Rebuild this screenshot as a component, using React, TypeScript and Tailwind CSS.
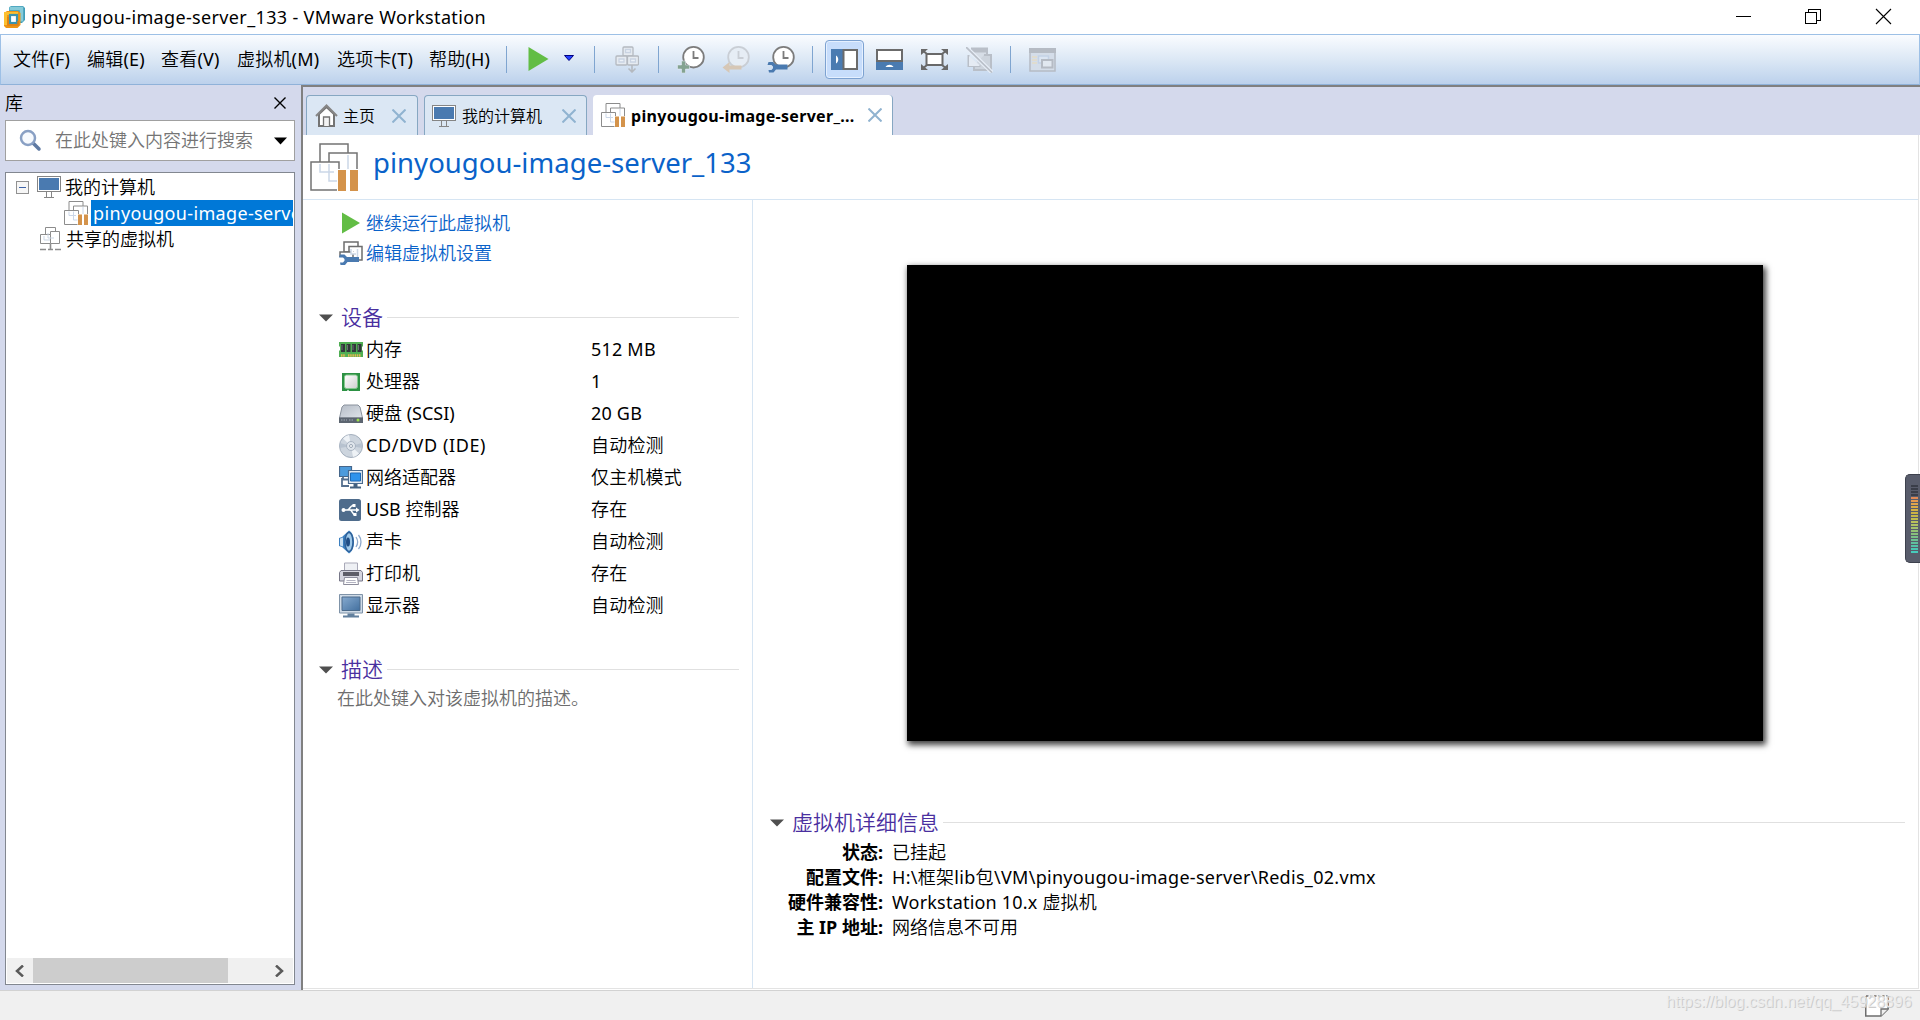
import type { ReactNode } from 'react'

const menus = [
  { label: '文件(F)', width: 'w-[74px]' },
  { label: '编辑(E)', width: 'w-[74px]' },
  { label: '查看(V)', width: 'w-[76px]' },
  { label: '虚拟机(M)', width: 'w-[100px]' },
  { label: '选项卡(T)', width: 'w-[92px]' },
  { label: '帮助(H)', width: 'w-[76px]' },
]

const devices = [
  { icon: <MemoryIcon />, name: '内存', value: '512 MB' },
  { icon: <CpuIcon />, name: '处理器', value: '1' },
  { icon: <DiskIcon />, name: '硬盘 (SCSI)', value: '20 GB' },
  { icon: <CdIcon />, name: 'CD/DVD (IDE)', value: '自动检测', tracking: 'tracking-[0.6px]' },
  { icon: <NetworkIcon />, name: '网络适配器', value: '仅主机模式' },
  { icon: <UsbIcon />, name: 'USB 控制器', value: '存在' },
  { icon: <SoundIcon />, name: '声卡', value: '自动检测' },
  { icon: <PrinterIcon />, name: '打印机', value: '存在' },
  { icon: <DisplayIcon />, name: '显示器', value: '自动检测' },
]

const details = [
  { label: '状态:', value: '已挂起' },
  { label: '配置文件:', value: 'H:\\框架lib包\\VM\\pinyougou-image-server\\Redis_02.vmx', tracking: 'tracking-[0.3px]' },
  { label: '硬件兼容性:', value: 'Workstation 10.x 虚拟机', tracking: 'tracking-[0.2px]' },
  { label: '主 IP 地址:', value: '网络信息不可用' },
]

const meterColors = [
  '#e08a55', '#e39a50', '#e0a54c', '#d9ac48', '#d3b145', '#ccb445', '#c6b848', '#c0bd50', '#b9c15a', '#aec264',
  '#a2c26c', '#95c174', '#88c07c', '#7abf86', '#6dc092', '#60c09e', '#54c2a8', '#4cc6b2', '#46cbbb',
]

export default function App() {
  return (
    <div className="flex h-[1020px] w-[1920px] flex-col overflow-hidden bg-white font-['Noto_Sans','Noto_Sans_CJK_SC_DemiLight','Noto_Sans_CJK_SC_Light','Noto_Sans_CJK_SC',sans-serif] text-[18px] leading-[26px] text-black">
      <TitleBar />
      <Toolbar />
      <div className="flex h-[905px] bg-[#d4d9ec]">
        <Library />
        <main className="flex w-[1619px] flex-col border-t-2 border-l-2 border-[#808080] bg-white">
          <Tabs />
          <div className="flex h-[854px] w-[1616px] flex-col border-r border-b border-[#e3e3e3]">
            <header className="flex h-[65px] shrink-0 items-center border-b border-[#d6e5f3] pl-[7px]">
              <VmIcon size={48} stroke={1.5} />
              <h1 className="mb-[8px] ml-[15px] text-[27.5px] leading-[36px] tracking-[0.03px] whitespace-nowrap text-[#0a62c9]">
                pinyougou-image-server_133
              </h1>
            </header>
            <div className="flex grow">
              <Summary />
              <Preview />
            </div>
          </div>
        </main>
      </div>
      <footer className="flex h-[30px] shrink-0 justify-end border-t border-[#d2d2d2] bg-[#f0f0f0]">
        <div className="relative h-full w-[260px]">
          <svg className="absolute top-[4px] left-[205px]" width="24" height="22" viewBox="0 0 24 22">
            <path d="M.75 1v20H16l7.2-7V1" fill="#fff" stroke="#6e6e6e" strokeWidth="1.5" />
            <path d="M1 1h22" stroke="#6e6e6e" strokeWidth="1.5" strokeDasharray="2.5 1.5" />
            <path d="M16 21v-7h7" fill="#eee" stroke="#6e6e6e" strokeWidth="1.3" />
          </svg>
          <span className="absolute top-[1px] left-[6px] font-['Liberation_Sans',sans-serif] text-[16px] leading-[20px] whitespace-nowrap text-[#efefef]/80 [text-shadow:1px_1px_0_#cccccc]">
            https://blog.csdn.net/qq_45928896
          </span>
        </div>
      </footer>
      <VolumeMeter />
    </div>
  )
}

function TitleBar() {
  return (
    <div className="flex h-[34px] shrink-0 items-center justify-between pl-[3px]">
      <div className="flex items-center">
        <LogoIcon />
        <span className="ml-[5px] tracking-[0.35px] whitespace-nowrap">pinyougou-image-server_133 - VMware Workstation</span>
      </div>
      <svg width="184" height="34" viewBox="0 0 184 34" fill="none" stroke="#000">
        <path d="M0 16.500h15M69.500 12.500h11v11h-11zM72.500 12.500v-3h11.500v11h-3.500" shapeRendering="crispEdges" />
        <path d="M140 9l15 15M155 9l-15 15" strokeWidth="1.1" />
      </svg>
    </div>
  )
}

function Separator({ className }: { className: string }) {
  return <div className={`h-[27px] w-px shrink-0 bg-[#7fa5d0] ${className}`} />
}

function Toolbar() {
  return (
    <div className="flex h-[51px] shrink-0 items-center border border-[#9dc0e6] border-b-[#8fb2d9] bg-linear-to-b from-[#fafcff] via-[#dce8f5] to-[#bcd1ec] pl-[12px]">
      {menus.map((menu) => (
        <span key={menu.label} className={`${menu.width} mb-[2px] shrink-0 tracking-[0.2px] whitespace-nowrap`}>
          {menu.label}
        </span>
      ))}
      <Separator className="ml-px" />
      <svg className="ml-[21px]" width="48" height="25" viewBox="0 0 48 25">
        <path d="M.5 0v24L20.500 12z" fill="#62bd45" />
        <path d="M36.500 8.500h9l-4.500 5z" fill="#2340ff" stroke="#000080" />
      </svg>
      <Separator className="ml-[18px]" />
      <svg className="ml-[20px]" width="24" height="27" viewBox="0 0 24 27" fill="#e6ebf1" stroke="#b4b9c0" strokeWidth="1.300">
        <rect x="8" y="1" width="10" height="9" rx="1" />
        <rect x="1" y="10" width="11" height="9" rx="1" />
        <rect x="12.500" y="10" width="11" height="9" rx="1" />
        <path d="M10.500 3.500h5v3h-5zM4 13h5v3H4zM15.500 13h5v3h-5z" stroke="#c9d3e2" fill="#edf2f8" />
        <path d="M17 19v7M13.500 22.500l3.500 3.500 3.500-3.500" fill="none" strokeWidth="1.600" />
      </svg>
      <Separator className="ml-[19px]" />
      <Clock className="ml-[18px]">
        <path d="M4.500 15h4v4h4v4h-4v4h-4v-4h-4v-4h4z" fill="#84a391" stroke="#eef3fa" strokeWidth=".5" />
      </Clock>
      <Clock className="ml-[17px]" faded>
        <path d="M.5 21.500L7.500 16v3.500h12v4h-12V27z" fill="#d6c7b6" />
      </Clock>
      <Clock className="ml-[17px]">
        <Wrench x={0.5} y={15.5} />
      </Clock>
      <Separator className="ml-[17px]" />
      <div className="ml-[12px] flex h-[39px] w-[39px] shrink-0 items-center justify-center rounded-[4px] border border-[#7da2d1] bg-[#c7ddfb] shadow-[inset_0_0_0_1px_#e5f0ff]">
        <svg width="27" height="21" viewBox="0 0 27 21">
          <path d="M0 0h27v21H0z" fill="#4a7bb1" />
          <path d="M12.500 1H26v19H12.500z" fill="#fff" stroke="#6b6b6b" strokeWidth="2" />
          <path d="M5 6.500c3 2 3 6 0 8z" fill="#fff" />
        </svg>
      </div>
      <svg className="ml-[12px]" width="27" height="21" viewBox="0 0 27 21">
        <path d="M0 0h27v21H0z" fill="#4a7bb1" />
        <path d="M1 1h25v11H1z" fill="#fff" stroke="#6b6b6b" strokeWidth="2" />
        <path d="M9.500 18c2-3 6-3 8 0z" fill="#fff" />
      </svg>
      <svg className="ml-[18px]" width="27" height="21" viewBox="0 0 27 21" fill="none" stroke="#696969" strokeWidth="2">
        <rect x="5.500" y="5" width="16" height="11" fill="#fff" rx=".5" />
        <path d="M1 1l5 4M26 1l-5 4M26 20l-5-4M1 20l5-4" />
        <path d="M0 0h7L0 6zM27 0h-7l7 6zM27 21h-7l7-6zM0 21h7l-7-6z" fill="#696969" stroke="none" />
      </svg>
      <svg className="ml-[18px]" width="27" height="26" viewBox="0 0 27 26" fill="none" stroke="#b9bfc8" strokeWidth="2">
        <path d="M6 3h15v14H12" fill="#d6dde6" />
        <path d="M6 1.500h15v3H6z" fill="#b9bfc8" />
        <path d="M18 8h7v15H8v-4" fill="#cdd4dd" />
        <path d="M2.500 8v11h12" fill="#dfe6ef" />
        <path d="M3 9l11 10H3z" fill="#e5ebf3" stroke="none" />
        <path d="M0 0l26 25.500" stroke="#e8eff8" strokeWidth="4" />
        <path d="M0 0l26 25.500" strokeWidth="1.700" />
      </svg>
      <Separator className="ml-[17px]" />
      <svg className="ml-[18px]" width="27" height="24" viewBox="0 0 27 24" fill="none" stroke="#b5bbc4" strokeWidth="1.500">
        <rect x="1" y="1" width="25" height="22" fill="#d4dde9" />
        <path d="M0 2.500h27" strokeWidth="5" />
        <path d="M3 9h5M3 12h5M3 15h5" stroke="#e3dcc6" />
        <rect x="9.500" y="8" width="10" height="7" fill="#dbe5f2" stroke="#c3d2e6" />
        <rect x="13" y="12" width="10.500" height="7.500" fill="#e1e8f0" strokeWidth="2" />
      </svg>
    </div>
  )
}

function Library() {
  return (
    <aside className="flex w-[301px] shrink-0 flex-col pl-[5px]">
      <div className="flex h-[35px] items-center justify-between pr-[15px]">
        <span>库</span>
        <svg width="12" height="12" viewBox="0 0 12 12" stroke="#000" strokeWidth="1.400">
          <path d="M.5.5l11 11M11.500.5l-11 11" />
        </svg>
      </div>
      <div className="flex h-[41px] w-[290px] items-center border border-[#a0a0a0] bg-white pl-[13px]">
        <svg width="23" height="23" viewBox="0 0 23 23" fill="none" strokeLinecap="round">
          <path d="M14 14l6 6" stroke="#5f7aa3" strokeWidth="3.500" />
          <circle cx="9" cy="9" r="7" fill="#f7fafe" stroke="#89a0c4" strokeWidth="2.500" />
        </svg>
        <span className="mb-px ml-[13px] w-[219px] text-[#757575]">在此处键入内容进行搜索</span>
        <svg width="13" height="8" viewBox="0 0 13 8">
          <path d="M0 .5h13L6.500 7.500z" />
        </svg>
      </div>
      <div className="mt-[11px] flex h-[813px] w-[290px] flex-col justify-between overflow-hidden border border-[#828790] bg-white pr-px pb-px">
        <div className="pt-px">
          <div className="flex h-[26px] items-center pl-[10px]">
            <svg width="13" height="13" viewBox="0 0 13 13" shapeRendering="crispEdges">
              <path d="M.5.5h12v12H.5z" fill="#f6f6f6" stroke="#919191" />
              <path d="M3 6.500h7" stroke="#3f63a8" />
            </svg>
            <span className="ml-[8px]"><MonitorIcon /></span>
            <span className="ml-[4px]">我的计算机</span>
          </div>
          <div className="flex h-[26px] items-center pl-[58px]">
            <VmIcon size={24} stroke={2} />
            <span className="ml-[3px] h-[26px] grow overflow-hidden bg-[#0078d7] pl-[2px] tracking-[0.35px] whitespace-nowrap text-white">
              pinyougou-image-server_133
            </span>
          </div>
          <div className="flex h-[26px] items-center pl-[34px]">
            <svg width="21" height="24" viewBox="0 0 21 24" fill="#fff" stroke="#8c8c8c">
              <path d="M5.500.5h10v9h-10z" />
              <path d="M10.500 4.500h9v12h-9z" />
              <path d="M.5 7.500h10v9H.5z" />
              <path d="M4 9v4h6M8 6v5h6" stroke="#ccd7e5" fill="none" />
              <path d="M10.500 17v5M0 22.500h6M8 22.500h5M15 22.500h6" strokeWidth="1.600" />
            </svg>
            <span className="ml-[5px]">共享的虚拟机</span>
          </div>
        </div>
        <div className="ml-px flex h-[25px] items-center justify-between bg-[#f0f0f0] pr-[9px] pl-[8px]">
          <svg width="9" height="12" viewBox="0 0 9 12" fill="none" stroke="#5a5a5a" strokeWidth="2.500">
            <path d="M8 .5L2 6l6 5.500" />
          </svg>
          <div className="mr-[47px] ml-[9px] h-[25px] grow bg-[#cdcdcd]" />
          <svg width="9" height="12" viewBox="0 0 9 12" fill="none" stroke="#5a5a5a" strokeWidth="2.500">
            <path d="M1 .5L7 6l-6 5.500" />
          </svg>
        </div>
      </div>
    </aside>
  )
}

function TabClose() {
  return (
    <svg width="14" height="14" viewBox="0 0 14 14" stroke="#90b3d0" strokeWidth="2">
      <path d="M.5.5l13 13M13.500.5l-13 13" />
    </svg>
  )
}

function Tabs() {
  return (
    <div className="flex h-[48px] w-full shrink-0 items-end bg-[#d4d9ec] pl-[3px] text-[16px] whitespace-nowrap">
      <div className="flex h-[40px] w-[112px] items-center rounded-t-[4px] border border-b-0 border-[#86a7c2] bg-[#dbe7f4] pl-[8px]">
        <svg width="23" height="23" viewBox="0 0 23 23" fill="#fff" stroke="#747474" strokeWidth="2">
          <path d="M4 10v12h15V10L11.500 3z" />
          <path d="M1 12L11.500 1.500 22 12" fill="none" stroke="#868686" />
          <path d="M8.500 22v-9h6v9" fill="#f3f3f3" strokeWidth="1.300" />
        </svg>
        <span className="ml-[5px] w-[49px] pt-[1px]">主页</span>
        <TabClose />
      </div>
      <div className="ml-[6px] flex h-[40px] w-[163px] items-center rounded-t-[4px] border border-b-0 border-[#86a7c2] bg-[#dbe7f4] pl-[7px]">
        <MonitorIcon />
        <span className="ml-[6px] w-[100px] pt-[1px]">我的计算机</span>
        <TabClose />
      </div>
      <div className="ml-[6px] flex h-[40px] w-[300px] items-center rounded-t-[4px] border-r border-[#86a7c2] bg-white pl-[8px]">
        <VmIcon size={24} stroke={2} />
        <span className="ml-[6px] w-[237px] pt-[2px] font-bold tracking-[0.3px]">pinyougou-image-server_...</span>
        <TabClose />
      </div>
    </div>
  )
}

function SectionTitle({ children }: { children: ReactNode }) {
  return (
    <div className="flex h-[28px] items-center">
      <svg width="14" height="8" viewBox="0 0 14 8">
        <path d="M0 .5h14L7 7.500z" fill="#4f4f4f" />
      </svg>
      <h2 className="mb-[2px] ml-[8px] text-[21px] leading-[28px] text-[#4a2f9f]">{children}</h2>
      <div className="mb-px ml-[4px] h-px grow bg-[#e0e0e0]" />
    </div>
  )
}

function Summary() {
  return (
    <section className="flex w-[450px] shrink-0 flex-col border-r border-[#d6e5f3] pt-[8px]">
      <div className="flex h-[30px] items-center pl-[38px] text-[#0a62c9]">
        <svg width="20" height="22" viewBox="0 0 20 22">
          <path d="M1 .5v21L19 11z" fill="#62bd45" />
        </svg>
        <span className="ml-[5px]">继续运行此虚拟机</span>
      </div>
      <div className="flex h-[30px] items-center pl-[36px] text-[#0a62c9]">
        <svg width="24" height="24" viewBox="0 0 24 24" fill="#fff" stroke="#6e6e6e" strokeWidth="1.500">
          <path d="M5 11V1h14v10z" />
          <path d="M10 15V5.500h13V19h-8" />
          <path d="M1 16v-5h13v5" />
          <path d="M12 8v5h5M18.500 8v8" stroke="#cdd8e6" />
          <Wrench x={0} y={13} />
        </svg>
        <span className="ml-[3px]">编辑虚拟机设置</span>
      </div>
      <div className="mt-[36px] pr-[13px] pl-[16px]">
        <SectionTitle>设备</SectionTitle>
      </div>
      <div className="mt-[2px]">
        {devices.map((device) => (
          <div key={device.name} className="flex h-[32px] items-center pl-[36px]">
            {device.icon}
            <span className={`mb-[2px] ml-[3px] w-[225px] ${device.tracking ?? ''}`}>{device.name}</span>
            <span className="mb-[2px] tracking-[0.2px]">{device.value}</span>
          </div>
        ))}
      </div>
      <div className="mt-[34px] pr-[13px] pl-[16px]">
        <SectionTitle>描述</SectionTitle>
      </div>
      <p className="mt-px pl-[34px] text-[#6d6d6d]">在此处键入对该虚拟机的描述。</p>
    </section>
  )
}

function Preview() {
  return (
    <section className="w-[1165px] shrink-0 pt-[65px]">
      <div className="ml-[154px] h-[476px] w-[856px] bg-black shadow-[2px_3px_6px_1px_rgba(0,0,0,0.75)]" />
      <div className="mt-[68px] pr-[13px] pl-[17px]">
        <SectionTitle>虚拟机详细信息</SectionTitle>
      </div>
      <dl className="mt-[2px]">
        {details.map((row) => (
          <div key={row.label} className="flex h-[25px] items-center whitespace-nowrap">
            <dt className="w-[130px] text-right font-['Noto_Sans','Noto_Sans_CJK_SC',sans-serif] font-bold">{row.label}</dt>
            <dd className={`ml-[9px] ${row.tracking ?? ''}`}>{row.value}</dd>
          </div>
        ))}
      </dl>
    </section>
  )
}

/* floats over the right edge of the desktop */
function VolumeMeter() {
  return (
    <div className="absolute top-[474px] left-[1905px] flex h-[89px] w-[15px] flex-col gap-px rounded-l-[5px] border border-r-0 border-[#3d414d] bg-[#585c6b] pt-[10px] pl-[5px]">
      {[0, 1, 2, 3].map((i) => (
        <div key={i} className="h-[2px] w-[7px] shrink-0 bg-[#3a3e49]" />
      ))}
      {meterColors.map((color) => (
        <div key={color} className="h-[2px] w-[7px] shrink-0" style={{ backgroundColor: color }} />
      ))}
    </div>
  )
}

function LogoIcon() {
  return (
    <svg width="23" height="24" viewBox="0 0 23 24">
      <path d="M6 2.500L8 1h12l2 2v12l-3 3H6z" fill="#3f9db8" />
      <path d="M6.500 3.500h12v13" fill="none" stroke="#86cbd9" strokeWidth="3.500" />
      <path d="M1 8l3-2h11l2.500 2v12l-3 3H3l-2-2z" fill="#ee9413" />
      <path d="M2.500 20V8.500h12.500" fill="none" stroke="#fdc02f" strokeWidth="3" />
      <rect x="7" y="10" width="7" height="8" fill="#fff" stroke="#3c93ac" strokeWidth="2.200" />
      <path d="M5 12v8h10v-4" fill="none" stroke="#e07f12" strokeWidth="1.500" />
    </svg>
  )
}

function VmIcon({ size, stroke }: { size: number; stroke: number }) {
  return (
    <svg className="shrink-0" width={size} height={size} viewBox="0 0 48 48" fill="#fff" stroke={size > 30 ? '#737373' : '#8c8c8c'} strokeWidth={stroke}>
      <path d="M10 20V1h28v12" />
      <path d="M19 20V10h28v30H30" />
      <path d="M1 19h28v28H1z" />
      <path d="M19 21v17h10M10 21v8h14M38 12v15" stroke="#cbd7e8" fill="none" />
      <path d="M27 26h21v22H27z" stroke="none" />
      <path d="M28 27h8v21h-8zM40 27h8v21h-8z" fill="#d4934b" stroke="none" />
    </svg>
  )
}

function MonitorIcon() {
  return (
    <svg width="24" height="24" viewBox="0 0 24 24" shapeRendering="crispEdges">
      <path d="M.5 1.500h23v15H.5z" fill="#fff" stroke="#858585" />
      <path d="M2 3h20v12H2z" fill="#4a7ab0" />
      <path d="M9.500 17v5M14.500 17v5M7 22.500h10" stroke="#858585" />
    </svg>
  )
}

function Wrench({ x, y }: { x: number; y: number }) {
  return (
    <path
      transform={`translate(${x} ${y})`}
      d="M1 .5h4.500L8 3h12v5H8.500L6 11H1.500L1 8.500h3l1.500-1.800V5L4 3.500H0z"
      fill="#4a7ab0"
      stroke="none"
    />
  )
}

function Clock({ children, className, faded }: { children: ReactNode; className: string; faded?: boolean }) {
  const ring = faded ? '#c9ced5' : '#7c7c7c'
  return (
    <svg className={`shrink-0 ${className}`} width="28" height="27" viewBox="0 0 28 27">
      <circle cx="16.500" cy="11.200" r="10.300" fill={faded ? '#e6edf5' : '#fff'} stroke={ring} strokeWidth="1.800" />
      <path d="M16.500 5v7h5" fill="none" stroke={ring} strokeWidth="1.800" />
      {children}
    </svg>
  )
}

function MemoryIcon() {
  return (
    <svg width="24" height="24" viewBox="0 0 24 24">
      <path d="M0 4h24v4l-1 1v3l1 1v6H0v-6l1-1V9L0 8z" fill="#4fae53" />
      <path d="M2 6h4v8H2zM7.500 6h4v8h-4zM13 6h4v8h-4zM18.500 6h4v8h-4z" fill="#31373a" />
      <path d="M3 7v5M8.500 7v5M14 7v5M19.500 7v5" stroke="#6b7275" />
      <path d="M2 17.500h4.500M9 17.500h13" stroke="#e6b653" strokeWidth="2.500" strokeDasharray="1.500 .7" />
    </svg>
  )
}

function CpuIcon() {
  return (
    <svg width="24" height="24" viewBox="0 0 24 24">
      <defs>
        <linearGradient id="cpuCap" x1="0" y1="0" x2="1" y2="1">
          <stop offset="0" stopColor="#fff" />
          <stop offset="1" stopColor="#cfcfcf" />
        </linearGradient>
      </defs>
      <path d="M3 3h18v18H10l-1-1.500L8 21H3z" fill="#2c9143" />
      <rect x="5.500" y="5" width="13" height="13.500" rx="2" fill="url(#cpuCap)" stroke="#86c98f" />
    </svg>
  )
}

function DiskIcon() {
  return (
    <svg width="24" height="24" viewBox="0 0 24 24">
      <defs>
        <linearGradient id="diskTop" x1="0" y1="0" x2="1" y2="1">
          <stop offset="0" stopColor="#b5bcc6" />
          <stop offset="1" stopColor="#dfe4ea" />
        </linearGradient>
      </defs>
      <path d="M5 3h14l2 2 2.500 11H.5L3 5z" fill="url(#diskTop)" stroke="#8a929d" />
      <path d="M0 15.500h24V21H0z" fill="#5c6570" />
      <path d="M2 18h6M10 18h4" stroke="#7f8893" strokeDasharray="1.500 1" strokeWidth="2" />
      <circle cx="19" cy="18" r="1.500" fill="#9be04a" />
    </svg>
  )
}

function CdIcon() {
  return (
    <svg width="24" height="24" viewBox="0 0 24 24">
      <circle cx="12" cy="12" r="11.500" fill="#cdd5de" stroke="#a4afbd" />
      <path d="M12 12L4 4.500A11 11 0 0 1 10 1zM12 12l8 7.500A11 11 0 0 1 14 23z" fill="#eef2f6" />
      <path d="M12 12L23 9a11 11 0 0 1 0 5zM12 12L1 9a11 11 0 0 0 0 5z" fill="#b7c2cf" />
      <circle cx="12" cy="12" r="4.500" fill="#dfe5ec" stroke="#a9b4c2" />
      <circle cx="12" cy="12" r="1.500" fill="#fff" stroke="#98a4b3" />
    </svg>
  )
}

function NetworkIcon() {
  return (
    <svg width="24" height="24" viewBox="0 0 24 24">
      <path d="M.5.500h12v10H.5z" fill="#4d9bdc" stroke="#46668a" strokeWidth="1.200" />
      <path d="M4 10.500v3h5M3 12v8h7" fill="none" stroke="#56708f" strokeWidth="1.800" />
      <path d="M9.500 4.500h14v13h-14z" fill="#e4ebf3" stroke="#4a6a8e" strokeWidth="1.200" />
      <path d="M11.500 7h10v8h-10z" fill="#2f93ec" stroke="#1f69b4" />
      <path d="M14.500 18h4v2.500h-4zM11 20.500h11v2H11z" fill="#446281" />
    </svg>
  )
}

function UsbIcon() {
  return (
    <svg width="24" height="24" viewBox="0 0 24 24" fill="none" stroke="#fff" strokeWidth="1.500">
      <rect x="0" y="1" width="22" height="22" rx="2.500" fill="#4f6c8c" stroke="none" />
      <path d="M4 12h15M8 12c3 0 3-4.500 6-4.500h2M11 12c2.500 0 2 4.500 5 4.500" />
      <path d="M2.500 12a2 2 0 1 0 4 0 2 2 0 1 0-4 0M17 9.500l3.500 2.500-3.500 2.500zM13.500 6h3v3h-3zM14.500 15h3v3h-3z" fill="#fff" stroke="none" />
    </svg>
  )
}

function SoundIcon() {
  return (
    <svg width="24" height="24" viewBox="0 0 24 24" fill="none">
      <path d="M0 8l3-1 7-6.500c4 2 5 8 5 11.500s-1 9.500-5 11.500L3 17l-3-1z" fill="#3b7fc0" />
      <path d="M1 8.500l3-1v9l-3-1z" fill="#c7dff2" />
      <ellipse cx="10" cy="12" rx="4" ry="9.500" fill="#9fc9ea" stroke="#2d5f97" strokeWidth="1.500" />
      <ellipse cx="9" cy="12" rx="2" ry="4.500" fill="#1f4d85" />
      <path d="M17 7c2 3 2 7 0 10M19.500 5c3.300 4 3.300 10 0 14" stroke="#8ea9cc" strokeWidth="1.300" />
    </svg>
  )
}

function PrinterIcon() {
  return (
    <svg width="24" height="24" viewBox="0 0 24 24">
      <path d="M5.500 1h13v8h-13z" fill="#eef0f4" stroke="#a9a9b8" />
      <path d="M2 8.500h20l1.500 2V19H.5v-8.500z" fill="#d4d4de" stroke="#777788" />
      <path d="M4 10h16v4H4z" fill="#5d5d68" />
      <path d="M5.500 15.500h13l1 7h-15z" fill="#fff" stroke="#8d8d9c" />
      <path d="M7.500 18.500h9M7 20.500h10" stroke="#b4b4c2" />
    </svg>
  )
}

function DisplayIcon() {
  return (
    <svg width="24" height="24" viewBox="0 0 24 24">
      <defs>
        <linearGradient id="screen" x1="0" y1="0" x2="1" y2="1">
          <stop offset="0" stopColor="#86aacf" />
          <stop offset="1" stopColor="#43709f" />
        </linearGradient>
      </defs>
      <path d="M.5.5h23v18.500H.5z" fill="#cfdbe7" stroke="#7f93a8" />
      <path d="M3 3h18v13.500H3z" fill="url(#screen)" stroke="#4c6b8b" />
      <path d="M8.500 19.500h7v2h-7zM4 21.500h16v2H4z" fill="#62809e" />
    </svg>
  )
}
